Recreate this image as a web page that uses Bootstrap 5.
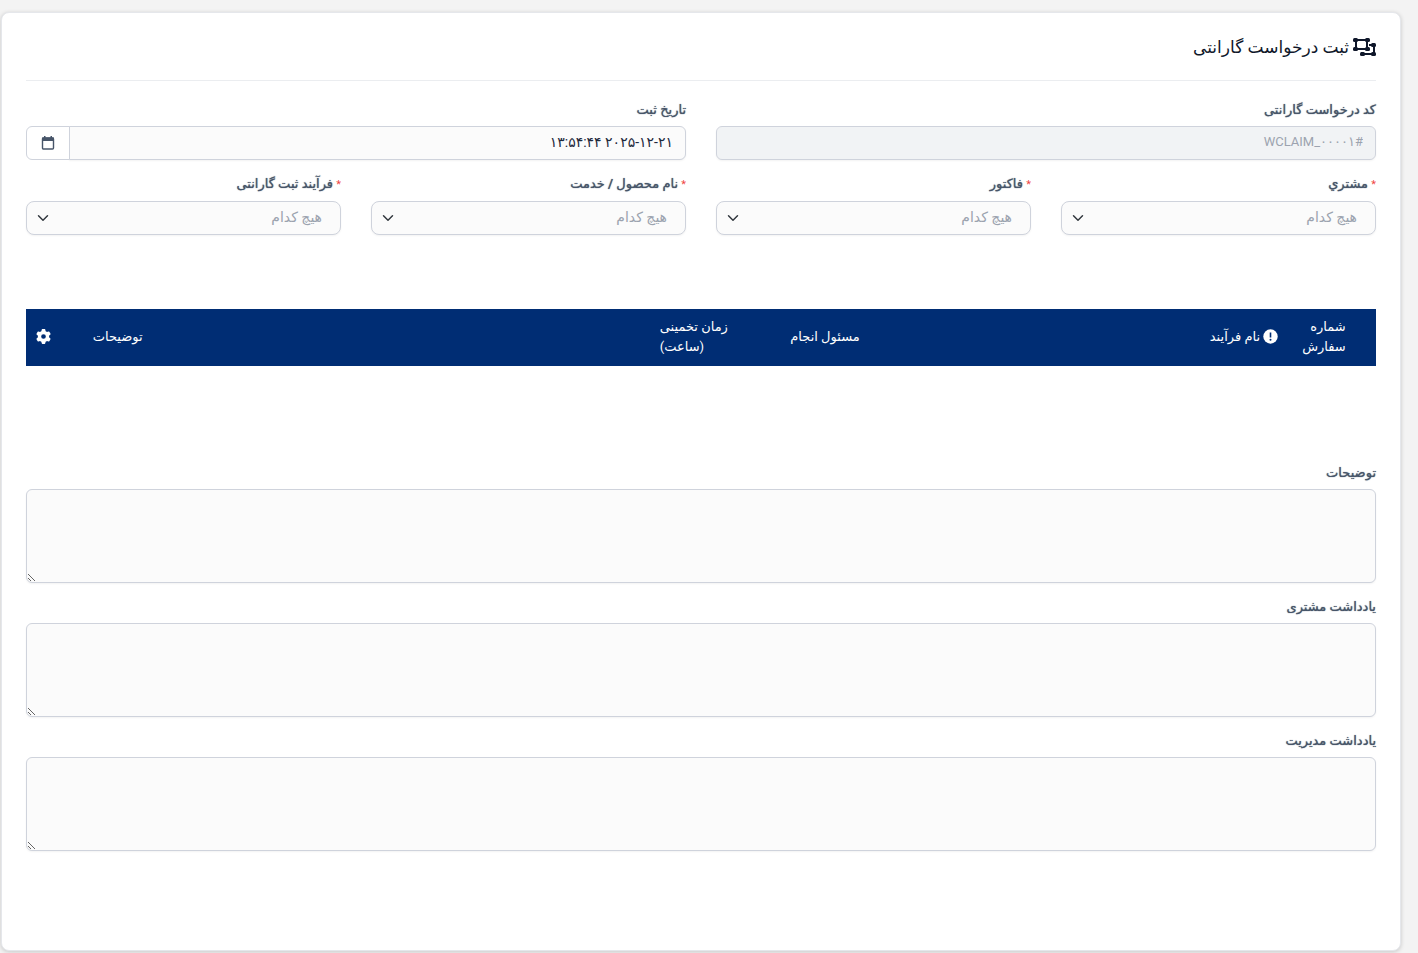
<!DOCTYPE html>
<html lang="fa" dir="rtl">
<head>
<meta charset="utf-8">
<meta name="viewport" content="width=device-width, initial-scale=1">
<title>ثبت درخواست گارانتی</title>
<link href="https://cdn.jsdelivr.net/npm/bootstrap@5.3.0/dist/css/bootstrap.min.css" rel="stylesheet">
<style>
  body { background: #f3f3f3; color: #0f172a; font-family: Roboto, "DejaVu Sans", sans-serif; font-size: 13px; line-height: 20px; }
  main { padding: 12px 17px 2px 1px; }
  .claim-card { border: 1px solid #e5e7eb; border-radius: 8px; box-shadow: 0 1px 4px rgba(0, 0, 0, .18); padding: 20px 24px 99px; }
  .claim-title { font-size: 17px; line-height: 28px; padding-bottom: 19px; margin-bottom: 19px; border-bottom: 1px solid #ebedf0; color: #0f172a; }
  .claim-title svg { width: 23px; height: 20px; }
  .claim-card .row { --bs-gutter-x: 30px; }
  .field { margin-bottom: 14px; }
  .field label { display: block; margin-bottom: 6px; font-size: 13px; font-weight: 500; color: #475569; text-shadow: 0 0 1px #475569; }
  .field label span { font-size: 11px; color: #ef4444; font-weight: 400; text-shadow: none; }
  .field .form-control, .field .form-select { font-size: 14px; line-height: 20px; min-height: 34px; padding: 5px 12px 7px; border-color: #cfd3dc; border-radius: 6px; background-color: #fbfbfb; color: #1e293b; box-shadow: 0 1px 2px rgba(0, 0, 0, .05); }
  .field .form-control:disabled { font-size: 13px; background-color: #f1f3f5; color: #9ca3af; }
  .field .form-select { height: 34px; padding: 5px 18px 7px 40px; border-radius: 8px; color: #9ca3af; background-position: left 10px center; background-size: 12px 12px; }
  .field textarea.form-control { height: 94px; }
  .field .input-group .form-control { border-radius: 0 6px 6px 0 !important; }
  .field .input-group .btn { width: 44px; padding: 0; margin: 0 -1px 0 0 !important; border: 1px solid #cfd3dc; border-radius: 6px 0 0 6px !important; background: #fff; color: #475569; }
  .steps { margin: 60px 0 97px; table-layout: fixed; }
  .steps th { height: 57px; padding: 7px 10px 9px; border: 0; background: #002d74; color: #fff; font-size: 13px; font-weight: 400; vertical-align: middle; }
  .steps svg { vertical-align: -3px; }
  .steps .edge-left { text-align: left; }
</style>
</head>
<body>
<main>
  <form class="card claim-card">
    <h1 class="claim-title d-flex align-items-center gap-1 fw-normal">
      <svg viewBox="0 0 23 20" aria-hidden="true"><g fill="none" stroke="currentColor" stroke-width="2"><path d="M3 3h11v9H3zM16 8h5v9H9v-2"/></g><g fill="currentColor"><rect x="0" y="1" width="5" height="4" rx="1.5"/><rect x="12" y="1" width="5" height="4" rx="1.5"/><rect x="0" y="10" width="5" height="4" rx="1.5"/><rect x="12" y="10" width="5" height="4" rx="1.5"/><rect x="18" y="6" width="5" height="4" rx="1.5"/><rect x="18" y="15" width="5" height="4" rx="1.5"/><rect x="7" y="15" width="5" height="4" rx="1.5"/></g></svg>
      <span>ثبت درخواست گارانتی</span>
    </h1>
    <div class="row">
      <div class="col-6 field">
        <label for="code">کد درخواست گارانتی</label>
        <input id="code" class="form-control" type="text" value="#WCLAIM_۰۰۰۰۱" disabled>
      </div>
      <div class="col-6 field">
        <label for="date">تاریخ ثبت</label>
        <div class="input-group">
          <input id="date" class="form-control" type="text" value="۲۰۲۵-۱۲-۲۱ ۱۳:۵۴:۴۴">
          <button class="btn d-flex align-items-center justify-content-center" type="button" aria-label="تقویم">
            <svg width="14" height="14" viewBox="0 0 14 14" aria-hidden="true"><rect x="1.5" y="2" width="11" height="11" rx="1" fill="none" stroke="currentColor" stroke-width="1.4"/><path d="M1 1.5h2V0h1.5v1.5h5V0H11v1.5h2V5H1z" fill="currentColor"/></svg>
          </button>
        </div>
      </div>
    </div>
    <div class="row">
      <div class="col-3 field">
        <label for="customer"><span>*</span> مشتري</label>
        <select id="customer" class="form-select"><option>هیچ کدام</option></select>
      </div>
      <div class="col-3 field">
        <label for="invoice"><span>*</span> فاکتور</label>
        <select id="invoice" class="form-select"><option>هیچ کدام</option></select>
      </div>
      <div class="col-3 field">
        <label for="product"><span>*</span> نام محصول / خدمت</label>
        <select id="product" class="form-select"><option>هیچ کدام</option></select>
      </div>
      <div class="col-3 field">
        <label for="process"><span>*</span> فرآیند ثبت گارانتی</label>
        <select id="process" class="form-select"><option>هیچ کدام</option></select>
      </div>
    </div>
    <table class="table steps">
      <colgroup><col style="width:1.5%"><col style="width:5%"><col style="width:31%"><col style="width:9.7%"><col style="width:6.6%"><col style="width:42%"><col style="width:4.2%"></colgroup>
      <thead>
        <tr>
          <th></th>
          <th>شماره سفارش</th>
          <th>
            <svg width="15" height="15" viewBox="0 0 15 15" aria-hidden="true"><circle cx="7.5" cy="7.5" r="7.2" fill="#fff"/><path d="M7.5 3.5v5" stroke="#002d74" stroke-width="1.6"/><circle cx="7.5" cy="10.7" r="1" fill="#002d74"/></svg>
            نام فرآیند
          </th>
          <th>مسئول انجام</th>
          <th class="text-nowrap edge-left">زمان تخمینی<br>(ساعت)</th>
          <th class="edge-left">توضیحات</th>
          <th class="edge-left">
            <svg width="15" height="15" viewBox="0 0 512 512" role="img" aria-label="تنظیمات"><path fill="#fff" d="M495.9 166.6c3.200 8.700.5 18.400-6.400 24.600l-43.300 39.400c1.100 8.300 1.700 16.800 1.700 25.400s-.6 17.100-1.700 25.400l43.300 39.400c6.900 6.200 9.600 15.900 6.400 24.600-4.400 11.900-9.700 23.300-15.800 34.300l-4.700 8.100c-6.600 11-14 21.400-22.100 31.200-5.900 7.200-15.700 9.600-24.500 6.800l-55.700-17.700c-13.400 10.300-28.200 18.900-44 25.400l-12.500 57.100c-2 9.100-9 16.300-18.200 17.800-13.800 2.300-28 3.500-42.500 3.500s-28.700-1.200-42.500-3.500c-9.200-1.500-16.200-8.700-18.200-17.800l-12.500-57.100c-15.800-6.500-30.600-15.100-44-25.400L83.100 425.900c-8.800 2.800-18.600.3-24.500-6.800-8.100-9.800-15.500-20.200-22.100-31.200l-4.700-8.100c-6.100-11-11.400-22.400-15.800-34.300-3.200-8.700-.5-18.400 6.400-24.600l43.300-39.400C64.600 273.100 64 264.600 64 256s.6-17.100 1.700-25.400L22.400 191.200c-6.900-6.200-9.600-15.900-6.400-24.600 4.400-11.900 9.700-23.300 15.800-34.300l4.700-8.100c6.600-11 14-21.400 22.100-31.200 5.900-7.200 15.700-9.600 24.500-6.800l55.700 17.700c13.400-10.300 28.200-18.900 44-25.400l12.500-57.100c2-9.100 9-16.300 18.200-17.800C227.300 1.200 241.500 0 256 0s28.700 1.200 42.500 3.500c9.200 1.500 16.200 8.700 18.200 17.800l12.500 57.100c15.800 6.500 30.600 15.100 44 25.400l55.700-17.700c8.800-2.800 18.600-.3 24.500 6.800 8.100 9.800 15.500 20.200 22.100 31.200l4.700 8.100c6.100 11 11.400 22.400 15.800 34.300zM256 336a80 80 0 1 0 0-160 80 80 0 1 0 0 160z"/></svg>
          </th>
        </tr>
      </thead>
    </table>
    <div class="field">
      <label for="notes">توضیحات</label>
      <textarea id="notes" class="form-control"></textarea>
    </div>
    <div class="field">
      <label for="customer-note">یادداشت مشتری</label>
      <textarea id="customer-note" class="form-control"></textarea>
    </div>
    <div class="field mb-0">
      <label for="admin-note">یادداشت مدیریت</label>
      <textarea id="admin-note" class="form-control"></textarea>
    </div>
  </form>
</main>
<script src="https://cdn.jsdelivr.net/npm/bootstrap@5.3.0/dist/js/bootstrap.bundle.min.js"></script>
</body>
</html>
